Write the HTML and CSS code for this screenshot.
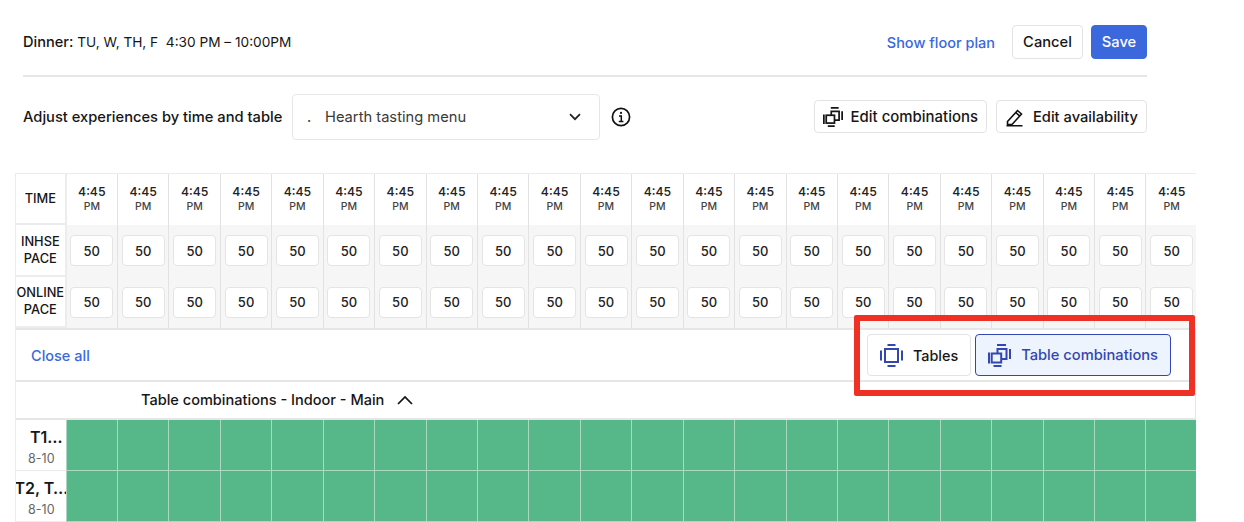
FILE: index.html
```html
<!DOCTYPE html>
<html>
<head>
    <title>Adjust experiences</title>
    <link rel="stylesheet" href="styles.css">
</head>
<body>
    <svg class="icon-defs" width="0" height="0">
        <symbol id="icon-table" viewBox="0 0 23 23">
            <rect x="5" y="5" width="13" height="13" fill="none" stroke="currentColor" stroke-width="2"/>
            <path d="M7.5 1h8M7.5 22h8M1 6.5v10M22 6.5v10" fill="none" stroke="currentColor" stroke-width="2"/>
        </symbol>
        <symbol id="icon-combo" viewBox="0 0 23 23">
            <path d="M9.5 9.5V5h9v10h-5.3" fill="none" stroke="currentColor" stroke-width="2"/>
            <rect x="3.7" y="9.5" width="9.5" height="9" fill="none" stroke="currentColor" stroke-width="2"/>
            <path d="M9 1h9M5.5 22h8M1 8.5v11M22 5v10" fill="none" stroke="currentColor" stroke-width="2"/>
        </symbol>
    </svg>

    <div class="top-bar">
        <div class="service"><b>Dinner:</b> TU, W, TH, F&nbsp; 4:30 PM – 10:00PM</div>
        <div class="top-actions">
            <a class="link floor-link">Show floor plan</a>
            <button class="btn btn-cancel">Cancel</button>
            <button class="btn btn-save">Save</button>
        </div>
    </div>

    <div class="adjust-bar">
        <div class="adjust-title">Adjust experiences by time and table</div>
        <div class="select">
            <span class="select-dot">.</span>
            <span class="select-text">Hearth tasting menu</span>
            <svg class="select-chevron" width="12" height="8" viewBox="0 0 12 8"><path d="M1 1.2l5 5 5-5" fill="none" stroke="#222" stroke-width="1.7"/></svg>
        </div>
        <svg class="info" width="20" height="20" viewBox="0 0 20 20">
            <circle cx="10" cy="10" r="8.6" fill="none" stroke="#111" stroke-width="1.7"/>
            <path d="M8 9h2.3v5.2M7.8 14.4h4.6" fill="none" stroke="#111" stroke-width="1.5"/>
            <circle cx="10" cy="5.9" r="1.1" fill="#111"/>
        </svg>
        <div class="adjust-actions">
            <button class="btn btn-small btn-combos">
                <svg class="btn-icon" width="20" height="20"><use href="#icon-combo"/></svg>
                Edit combinations
            </button>
            <button class="btn btn-small">
                <svg class="btn-icon" width="20" height="20" viewBox="0 0 20 20"><path d="M2.5 14.5L12.5 3.5l4 3.5-9.5 10.5H2.5zM10.8 5.5l4 3.6M1.5 18.7h16" fill="none" stroke="#111" stroke-width="1.6"/></svg>
                Edit availability
            </button>
        </div>
    </div>

    <div class="grid">
        <div class="row row-time">
            <div class="row-head">TIME</div>
            <div class="cell"><b>4:45</b>PM</div><div class="cell"><b>4:45</b>PM</div><div class="cell"><b>4:45</b>PM</div><div class="cell"><b>4:45</b>PM</div><div class="cell"><b>4:45</b>PM</div><div class="cell"><b>4:45</b>PM</div><div class="cell"><b>4:45</b>PM</div><div class="cell"><b>4:45</b>PM</div><div class="cell"><b>4:45</b>PM</div><div class="cell"><b>4:45</b>PM</div><div class="cell"><b>4:45</b>PM</div>
            <div class="cell"><b>4:45</b>PM</div><div class="cell"><b>4:45</b>PM</div><div class="cell"><b>4:45</b>PM</div><div class="cell"><b>4:45</b>PM</div><div class="cell"><b>4:45</b>PM</div><div class="cell"><b>4:45</b>PM</div><div class="cell"><b>4:45</b>PM</div><div class="cell"><b>4:45</b>PM</div><div class="cell"><b>4:45</b>PM</div><div class="cell"><b>4:45</b>PM</div><div class="cell"><b>4:45</b>PM</div>
        </div>
        <div class="row row-pace">
            <div class="row-head">INHSE<br>PACE</div>
            <div class="cell"><span class="pace">50</span></div><div class="cell"><span class="pace">50</span></div><div class="cell"><span class="pace">50</span></div><div class="cell"><span class="pace">50</span></div><div class="cell"><span class="pace">50</span></div><div class="cell"><span class="pace">50</span></div><div class="cell"><span class="pace">50</span></div><div class="cell"><span class="pace">50</span></div><div class="cell"><span class="pace">50</span></div><div class="cell"><span class="pace">50</span></div><div class="cell"><span class="pace">50</span></div>
            <div class="cell"><span class="pace">50</span></div><div class="cell"><span class="pace">50</span></div><div class="cell"><span class="pace">50</span></div><div class="cell"><span class="pace">50</span></div><div class="cell"><span class="pace">50</span></div><div class="cell"><span class="pace">50</span></div><div class="cell"><span class="pace">50</span></div><div class="cell"><span class="pace">50</span></div><div class="cell"><span class="pace">50</span></div><div class="cell"><span class="pace">50</span></div><div class="cell"><span class="pace">50</span></div>
        </div>
        <div class="row row-pace">
            <div class="row-head">ONLINE<br>PACE</div>
            <div class="cell"><span class="pace">50</span></div><div class="cell"><span class="pace">50</span></div><div class="cell"><span class="pace">50</span></div><div class="cell"><span class="pace">50</span></div><div class="cell"><span class="pace">50</span></div><div class="cell"><span class="pace">50</span></div><div class="cell"><span class="pace">50</span></div><div class="cell"><span class="pace">50</span></div><div class="cell"><span class="pace">50</span></div><div class="cell"><span class="pace">50</span></div><div class="cell"><span class="pace">50</span></div>
            <div class="cell"><span class="pace">50</span></div><div class="cell"><span class="pace">50</span></div><div class="cell"><span class="pace">50</span></div><div class="cell"><span class="pace">50</span></div><div class="cell"><span class="pace">50</span></div><div class="cell"><span class="pace">50</span></div><div class="cell"><span class="pace">50</span></div><div class="cell"><span class="pace">50</span></div><div class="cell"><span class="pace">50</span></div><div class="cell"><span class="pace">50</span></div><div class="cell"><span class="pace">50</span></div>
        </div>

        <div class="toolbar">
            <a class="link">Close all</a>
            <div class="toggle">
                <button class="btn btn-toggle btn-tables">
                    <svg class="toggle-icon" width="23" height="23"><use href="#icon-table"/></svg>
                    Tables
                </button>
                <button class="btn btn-toggle active">
                    <svg class="toggle-icon" width="23" height="23"><use href="#icon-combo"/></svg>
                    Table combinations
                </button>
            </div>
        </div>

        <div class="section-head">
            Table combinations - Indoor - Main
            <svg width="16" height="10" viewBox="0 0 16 10"><path d="M1 9l7-7 7 7" fill="none" stroke="#111" stroke-width="1.7"/></svg>
        </div>

        <div class="row row-table">
            <div class="row-head"><span class="table-name table-name-short">T1…</span><span class="table-size">8-10</span></div>
            <div class="slot"></div><div class="slot"></div><div class="slot"></div><div class="slot"></div><div class="slot"></div><div class="slot"></div><div class="slot"></div><div class="slot"></div><div class="slot"></div><div class="slot"></div><div class="slot"></div>
            <div class="slot"></div><div class="slot"></div><div class="slot"></div><div class="slot"></div><div class="slot"></div><div class="slot"></div><div class="slot"></div><div class="slot"></div><div class="slot"></div><div class="slot"></div><div class="slot"></div>
        </div>
        <div class="row row-table">
            <div class="row-head"><span class="table-name">T2, T…</span><span class="table-size">8-10</span></div>
            <div class="slot"></div><div class="slot"></div><div class="slot"></div><div class="slot"></div><div class="slot"></div><div class="slot"></div><div class="slot"></div><div class="slot"></div><div class="slot"></div><div class="slot"></div><div class="slot"></div>
            <div class="slot"></div><div class="slot"></div><div class="slot"></div><div class="slot"></div><div class="slot"></div><div class="slot"></div><div class="slot"></div><div class="slot"></div><div class="slot"></div><div class="slot"></div><div class="slot"></div>
        </div>
    </div>

    <div class="highlight"></div>
</body>
</html>
```

FILE: styles.css
```css
html, body {
    height: 522px;
    overflow: hidden;
}
body {
    margin: 0;
    position: relative;
    background: white;
    color: #161616;
    font-family: Inter, "Liberation Sans", sans-serif;
    font-size: 14.7px;
}
.icon-defs {
    position: absolute;
}
.link {
    color: #3b68dc;
    font-size: 14.5px;
    font-weight: 500;
}
.btn {
    display: flex;
    align-items: center;
    border: 1px solid #e3e3e3;
    border-radius: 4px;
    background: white;
    color: #161616;
    font-family: inherit;
    font-size: 14.7px;
    font-weight: 500;
    white-space: nowrap;
}
.top-bar {
    display: flex;
    align-items: flex-start;
    justify-content: space-between;
    width: 1124px;
    height: 50px;
    margin-left: 23px;
    padding-top: 25px;
    border-bottom: 2px solid #e6e6e6;
}
.service {
    line-height: 34px;
    font-size: 13.65px;
}
.service b {
    font-size: 14.6px;
    font-weight: 500;
}
.top-actions {
    display: flex;
    align-items: center;
}
.floor-link {
    margin-right: 17px;
}
.btn-cancel {
    justify-content: center;
    width: 71px;
    height: 34px;
    padding: 0;
    margin-right: 8px;
}
.btn-save {
    justify-content: center;
    width: 56px;
    height: 34px;
    padding: 0;
    background: #3b68dc;
    border-color: #3b68dc;
    color: white;
}
.adjust-bar {
    display: flex;
    align-items: center;
    width: 1124px;
    height: 46px;
    margin: 17px 0 0 23px;
}
.adjust-title {
    width: 269px;
    font-weight: 500;
    white-space: nowrap;
}
.select {
    display: flex;
    align-items: center;
    box-sizing: border-box;
    width: 308px;
    height: 46px;
    padding: 0 18px 0 14px;
    border: 1px solid #e6e6e6;
    border-radius: 4px;
    color: #3a3a3a;
}
.select-dot {
    width: 18px;
}
.select-text {
    flex: 1;
}
.info {
    margin-left: 11px;
}
.adjust-actions {
    display: flex;
    margin-left: auto;
    margin-bottom: 2px;
    gap: 9px;
}
.btn-small {
    height: 33px;
    padding: 1px 8px 0;
}
.btn-combos {
    font-size: 14.95px;
}
.btn-icon {
    margin-right: 8px;
}
.grid {
    box-sizing: border-box;
    width: 1181px;
    margin: 33px 0 0 15px;
    border-left: 1px solid #ececec;
    border-top: 1px solid #ececec;
    overflow: hidden;
}
.row {
    display: grid;
    grid-template-columns: 50.6px repeat(22, 51.43px);
    height: 51.3px;
}
.row-head {
    display: flex;
    align-items: center;
    justify-content: center;
    text-align: center;
    font-size: 12.8px;
    font-weight: 500;
    line-height: 17px;
    border-right: 2px solid #ececec;
    border-bottom: 2px solid #ececec;
    white-space: nowrap;
}
.cell {
    display: flex;
    flex-direction: column;
    align-items: center;
    justify-content: center;
    border-right: 1px solid #e2e2e2;
    font-size: 10.5px;
    font-weight: 500;
    color: #444;
}
.row-time .cell {
    padding-bottom: 3px;
}
.cell b {
    font-size: 12.3px;
    font-weight: 500;
    color: #222;
    line-height: 16px;
}
.row-pace .cell {
    background: #f6f6f6;
}
.pace {
    display: flex;
    align-items: center;
    justify-content: center;
    box-sizing: border-box;
    width: 43px;
    height: 31px;
    border: 1px solid #e4e4e4;
    border-radius: 4px;
    background: white;
    color: #222;
    font-size: 13px;
}
.toolbar {
    display: flex;
    align-items: center;
    justify-content: space-between;
    box-sizing: border-box;
    height: 54.5px;
    padding: 0 24px 0 15px;
    border-top: 2px solid #e6e6e6;
    border-right: 1px solid #e6e6e6;
    border-bottom: 2px solid #e6e6e6;
}
.toggle {
    display: flex;
    gap: 4px;
}
.btn-toggle {
    height: 42px;
    padding: 0 12px;
}
.btn-tables {
    font-size: 14.4px;
}
.toggle-icon {
    color: #3347b0;
    margin-right: 10px;
}
.btn-toggle.active {
    background: #edf4fe;
    border-color: #3347b0;
    color: #3347b0;
}
.section-head {
    display: flex;
    align-items: center;
    gap: 13px;
    box-sizing: border-box;
    height: 37.5px;
    padding-left: 125px;
    font-size: 14.55px;
    font-weight: 500;
    border-right: 1px solid #e6e6e6;
    border-bottom: 2px solid #e6e6e6;
}
.row-table .row-head {
    flex-direction: column;
    border-right: none;
    border-bottom: 1px solid #ececec;
}
.table-name {
    font-size: 16px;
    font-weight: 600;
    line-height: 26px;
}
.table-name-short {
    padding-left: 10px;
}
.table-size {
    font-size: 12.5px;
    font-weight: 400;
    color: #666;
}
.slot {
    margin-left: -1px;
    background: #56b788;
    border-left: 1px solid #a9d9c0;
    border-bottom: 1px solid #a9d9c0;
}
.highlight {
    position: absolute;
    left: 854px;
    top: 315px;
    box-sizing: border-box;
    width: 341px;
    height: 81px;
    border: 6px solid #ee3124;
    border-radius: 2px;
}
```
